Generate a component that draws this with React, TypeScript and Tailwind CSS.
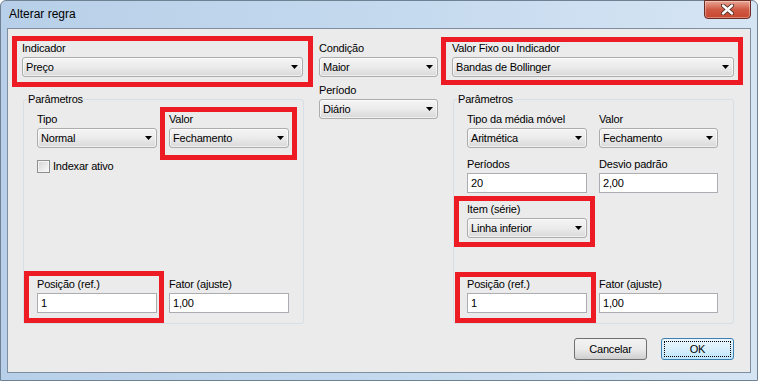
import React from 'react';

const RED = 'border-[5px] border-[#ed1c24]';

function Arrow() {
  return (
    <svg width="7" height="4" viewBox="0 0 7 4">
      <path d="M0 0H7L3.5 4Z" fill="#000" />
    </svg>
  );
}

function Combo({ value, w }: { value: string; w: string }) {
  return (
    <div className={`${w} h-[20px] flex items-center justify-between pl-[3px] pr-[4px] rounded-[3px] border border-[#acacac] bg-gradient-to-b from-[#f5f5f5] via-[#ebebeb] to-[#d9d9d9] shadow-[inset_0_0_0_1px_rgba(255,255,255,0.6)]`}>
      <span className="whitespace-nowrap">{value}</span>
      <Arrow />
    </div>
  );
}

function TextBox({ value, w }: { value: string; w: string }) {
  return (
    <div className={`${w} h-[20px] flex items-center pl-[3px] bg-white border border-[#abadb3]`}>
      {value}
    </div>
  );
}

function Field({ label, children }: { label: string; children: React.ReactNode }) {
  return (
    <div className="flex flex-col">
      <div className="h-[13px] leading-[13px] mb-[2px] whitespace-nowrap">{label}</div>
      {children}
    </div>
  );
}

function Group({ children }: { children: React.ReactNode }) {
  return (
    <div className="w-[281px] h-[225px] border border-[#d5dfe5] rounded-[3px] flex flex-col pl-[13px] pb-[10px]">
      <span className="-mt-[7px] -ml-[10px] w-fit px-[1px] h-[13px] leading-[13px] bg-[#ebebeb]">Parâmetros</span>
      {children}
    </div>
  );
}

function Button({ label, primary }: { label: string; primary?: boolean }) {
  return (
    <div
      className={
        primary
          ? 'w-[73px] h-[22px] flex items-center justify-center rounded-[3px] border border-[#3c7fb1] bg-gradient-to-b from-[#eaf6fd] via-[#d9f0fc] to-[#bee6fd] outline-1 outline-dotted outline-black -outline-offset-4'
          : 'w-[73px] h-[22px] flex items-center justify-center rounded-[3px] border border-[#707070] bg-gradient-to-b from-[#f2f2f2] via-[#ebebeb] to-[#cfcfcf]'
      }
    >
      {label}
    </div>
  );
}

export default function App() {
  return (
    <div className="w-[758px] h-[381px] flex flex-col rounded-t-[6px] border border-[#6f8294] bg-gradient-to-r from-[#b7cfe8] via-[#c4d9ee] to-[#d6e5f4] font-['Liberation_Sans',Arial,sans-serif] text-[11px] tracking-[-0.2px] text-black">
      {/* title bar */}
      <div className="h-[27px] flex justify-between">
        <div className="pl-[8px] pt-[6px] text-[12px] leading-[15px] tracking-normal">Alterar regra</div>
        <div className="-mt-[1px] mr-[6px] w-[47px] h-[19px] flex items-center justify-center rounded-b-[4px] border border-[#6b2a22] bg-gradient-to-b from-[#e8a595] via-[#cf5a44] to-[#c9452f] shadow-[inset_0_0_0_1px_rgba(255,255,255,0.35)]">
          <svg width="13" height="11" viewBox="0 0 13 11">
            <path d="M2 1.5L11 9.5M11 1.5L2 9.5" stroke="#4a2a26" strokeWidth="4.2" strokeLinecap="round" />
            <path d="M2 1.5L11 9.5M11 1.5L2 9.5" stroke="#fff" strokeWidth="2.4" strokeLinecap="round" />
          </svg>
        </div>
      </div>

      {/* client area */}
      <div className="flex-1 mx-[6px] mb-[7px] border border-[#7f8fa0] bg-[#ebebeb] flex flex-col pt-[7px] pl-[4px]">
        <div className="flex items-start">
          {/* left column */}
          <div className="flex flex-col">
            <div className={`${RED} w-[301px] pl-[5px] pt-[1px] pr-[5px] pb-[5px]`}>
              <Field label="Indicador">
                <Combo value="Preço" w="w-full" />
              </Field>
            </div>
            <div className="mt-[12px] ml-[11px]">
              <Group>
                <div className="flex mt-[7px]">
                  <Field label="Tipo">
                    <Combo value="Normal" w="w-[120px]" />
                  </Field>
                  <div className={`${RED} ml-[3px] -mt-[6px] -mb-[12px] -mr-[8px] pl-[4px] pt-[1px] pr-[3px] pb-[7px]`}>
                    <Field label="Valor">
                      <Combo value="Fechamento" w="w-[120px]" />
                    </Field>
                  </div>
                </div>
                <div className="flex items-center gap-[3px] mt-[12px] h-[13px]">
                  <div className="w-[13px] h-[13px] border border-[#8e8f8f] bg-gradient-to-br from-[#d4d4d4] to-[#fbfbfb] shadow-[inset_0_0_0_1px_#f4f4f4]" />
                  <span className="leading-[13px]">Indexar ativo</span>
                </div>
                <div className="flex mt-auto">
                  <div className={`${RED} -ml-[13px] -mt-[7px] -mb-[10px] -mr-[7px] pl-[8px] pt-[2px] pr-[2px] pb-[5px]`}>
                    <Field label="Posição (ref.)">
                      <TextBox value="1" w="w-[120px]" />
                    </Field>
                  </div>
                  <div className="ml-[12px]">
                    <Field label="Fator (ajuste)">
                      <TextBox value="1,00" w="w-[120px]" />
                    </Field>
                  </div>
                </div>
              </Group>
            </div>
          </div>

          {/* middle column */}
          <div className="ml-[6px] pt-[6px] w-[119px] flex flex-col">
            <Field label="Condição">
              <Combo value="Maior" w="w-full" />
            </Field>
            <div className="mt-[7px]">
              <Field label="Período">
                <Combo value="Diário" w="w-full" />
              </Field>
            </div>
          </div>

          {/* right column */}
          <div className="ml-[3px] pt-[1px] flex flex-col">
            <div className={`${RED} w-[302px] pl-[6px] pr-[4px] pb-[3px]`}>
              <Field label="Valor Fixo ou Indicador">
                <Combo value="Bandas de Bollinger" w="w-full" />
              </Field>
            </div>
            <div className="mt-[14px] ml-[12px]">
              <Group>
                <div className="flex mt-[7px]">
                  <Field label="Tipo da média móvel">
                    <Combo value="Aritmética" w="w-[120px]" />
                  </Field>
                  <div className="ml-[12px]">
                    <Field label="Valor">
                      <Combo value="Fechamento" w="w-[119px]" />
                    </Field>
                  </div>
                </div>
                <div className="flex mt-[10px]">
                  <Field label="Períodos">
                    <TextBox value="20" w="w-[120px]" />
                  </Field>
                  <div className="ml-[12px]">
                    <Field label="Desvio padrão">
                      <TextBox value="2,00" w="w-[119px]" />
                    </Field>
                  </div>
                </div>
                <div className={`${RED} self-start mt-[3px] -ml-[13px] -mb-[9px] pl-[8px] pt-[2px] pr-[3px] pb-[4px]`}>
                  <Field label="Item (série)">
                    <Combo value="Linha inferior" w="w-[120px]" />
                  </Field>
                </div>
                <div className="flex mt-auto">
                  <div className={`${RED} -ml-[12px] -mt-[6px] -mb-[10px] -mr-[9px] pl-[7px] pt-[1px] pr-[4px] pb-[5px]`}>
                    <Field label="Posição (ref.)">
                      <TextBox value="1" w="w-[120px]" />
                    </Field>
                  </div>
                  <div className="ml-[12px]">
                    <Field label="Fator (ajuste)">
                      <TextBox value="1,00" w="w-[119px]" />
                    </Field>
                  </div>
                </div>
              </Group>
            </div>
          </div>
        </div>

        {/* buttons */}
        <div className="flex justify-end gap-[14px] mt-[14px] pr-[16px]">
          <Button label="Cancelar" />
          <Button label="OK" primary />
        </div>
      </div>
    </div>
  );
}
